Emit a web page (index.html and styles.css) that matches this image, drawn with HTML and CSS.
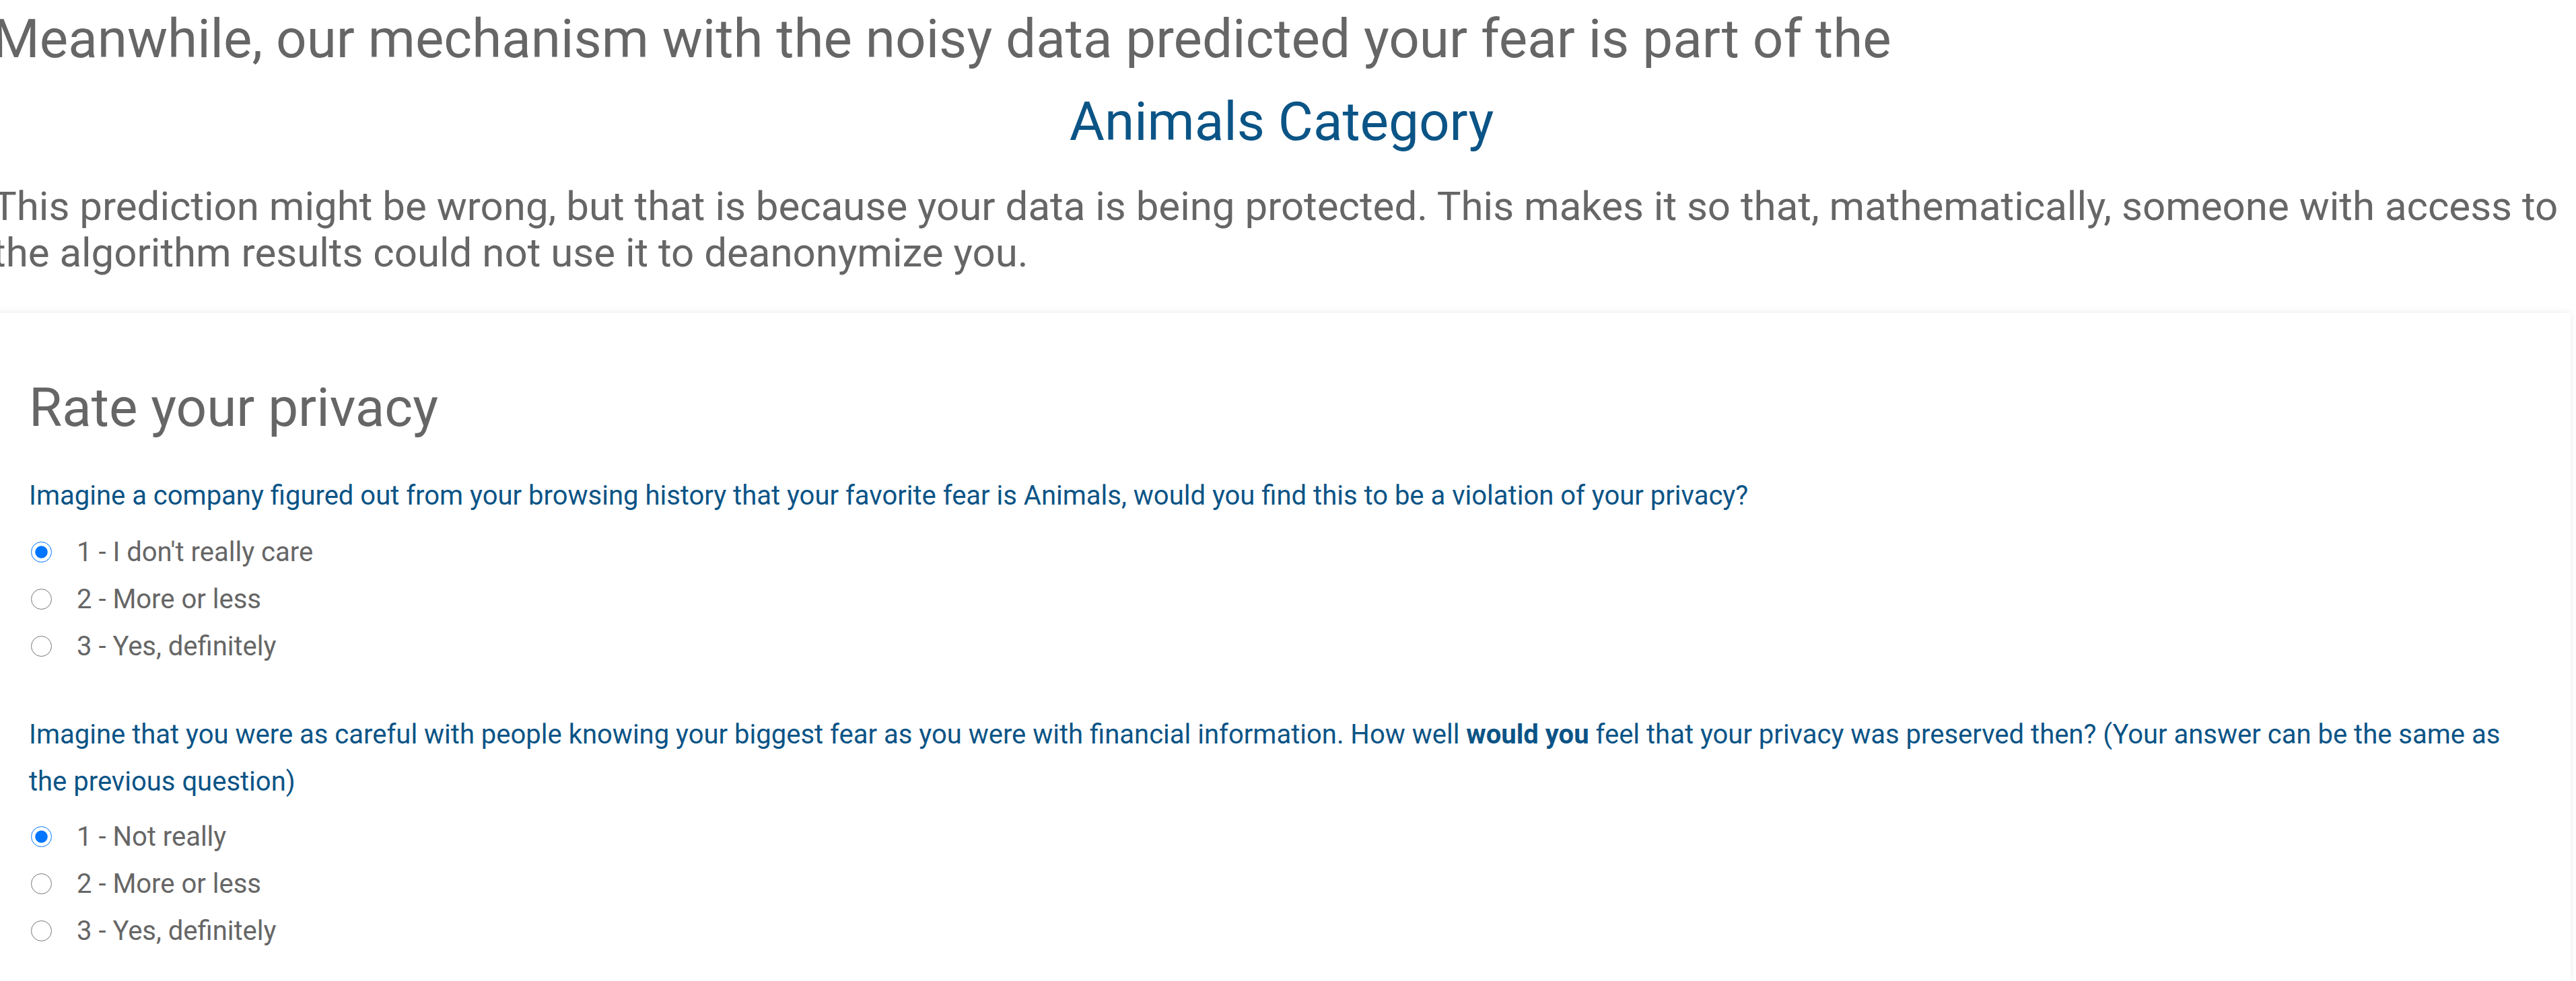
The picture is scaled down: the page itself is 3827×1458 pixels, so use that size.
FILE: index.html
```html
<!DOCTYPE html>
<html lang="en">
<head>
<meta charset="utf-8">
<title>Rate your privacy</title>
<link rel="stylesheet" href="styles.css">
</head>
<body>
<main class="page">
  <h1 class="title">Meanwhile, our mechanism with the noisy data predicted your fear is part of the</h1>
  <h2 class="category">Animals Category</h2>
  <p class="explain">This prediction might be wrong, but that is because your data is being protected. This makes it so that, mathematically, someone with access to the algorithm results could not use it to deanonymize you.</p>

  <section class="card">
    <h3 class="card-title">Rate your privacy</h3>

    <div class="question">
      <p class="prompt">Imagine a company figured out from your browsing history that your favorite fear is Animals, would you find this to be a violation of your privacy?</p>
      <div class="options">
        <label class="option"><input type="radio" name="q1" checked><span>1 - I don't really care</span></label>
        <label class="option"><input type="radio" name="q1"><span>2 - More or less</span></label>
        <label class="option"><input type="radio" name="q1"><span>3 - Yes, definitely</span></label>
      </div>
    </div>

    <div class="question">
      <p class="prompt">Imagine that you were as careful with people knowing your biggest fear as you were with financial information. How well <b>would you</b> feel that your privacy was preserved then? (Your answer can be the same as the previous question)</p>
      <div class="options">
        <label class="option"><input type="radio" name="q2" checked><span>1 - Not really</span></label>
        <label class="option"><input type="radio" name="q2"><span>2 - More or less</span></label>
        <label class="option"><input type="radio" name="q2"><span>3 - Yes, definitely</span></label>
      </div>
    </div>
  </section>
</main>
</body>
</html>
```

FILE: styles.css
```css
html, body {
  margin: 0;
  padding: 0;
  background: #ffffff;
}

body {
  font-family: Roboto, "Liberation Sans", Arial, sans-serif;
  color: #666666;
  overflow: hidden;
}

.page {
  margin-left: -11px;
  width: 3830px;
  padding-top: 10px;
}

.title {
  margin: 0;
  font-size: 80px;
  line-height: 96px;
  font-weight: 400;
  color: #666666;
}

.category {
  margin: 27px 0 0;
  font-size: 80px;
  line-height: 96px;
  font-weight: 400;
  color: #0b5486;
  text-align: center;
}

.explain {
  margin: 43px 0 0;
  font-size: 60px;
  line-height: 69px;
  color: #666666;
}

.card {
  margin-top: 55px;
  padding: 93px 54px 40px;
  background: #ffffff;
  box-shadow: 0 0 10px rgba(0, 0, 0, 0.09);
}

.card-title {
  margin: 0;
  font-size: 80px;
  line-height: 96px;
  font-weight: 400;
  color: #666666;
}

.question {
  margin-top: 48px;
}

.question + .question {
  margin-top: 62px;
}

.prompt {
  margin: 0;
  font-size: 40px;
  line-height: 70px;
  color: #0b5486;
}

.prompt b {
  font-weight: 700;
}

.options {
  margin-top: 13px;
  display: flex;
  flex-direction: column;
}

.question + .question .options {
  margin-top: 11px;
}

.option {
  display: flex;
  align-items: center;
  height: 70px;
  font-size: 40px;
  color: #666666;
}

.option input {
  width: 31px;
  height: 31px;
  margin: 0 37px 0 3px;
  flex: none;
}
```
